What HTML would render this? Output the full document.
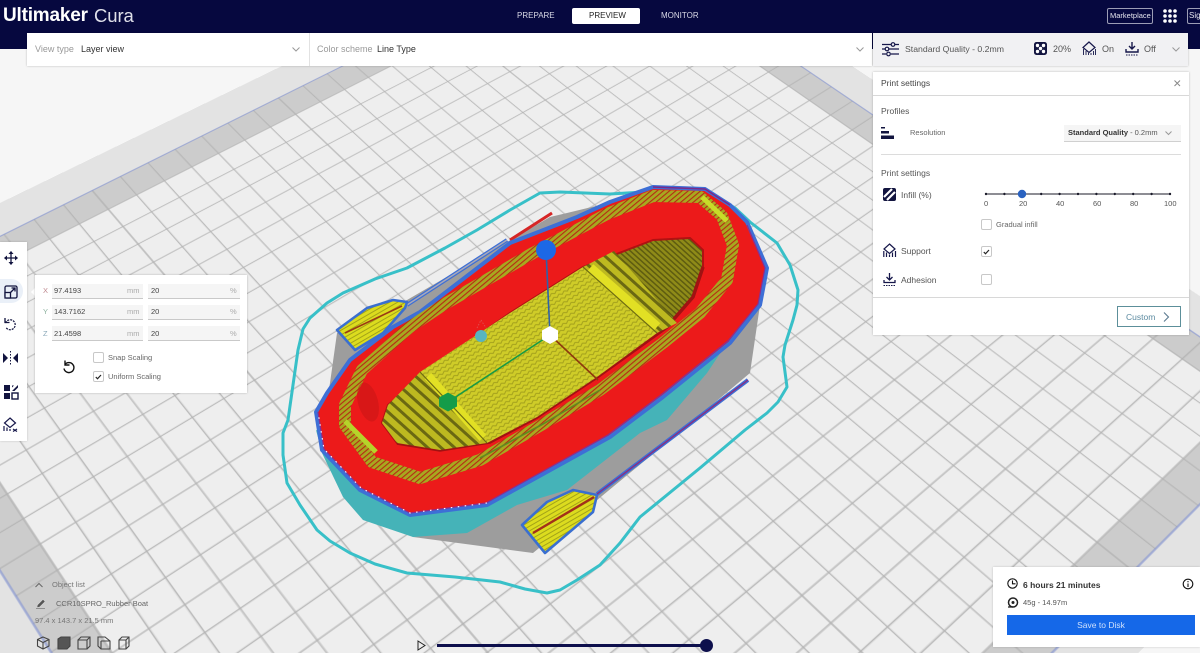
<!DOCTYPE html>
<html><head><meta charset="utf-8"><title>Ultimaker Cura</title>
<style>
html,body{margin:0;padding:0;width:1200px;height:653px;overflow:hidden;background:#f6f6f6;font-family:"Liberation Sans",sans-serif}
#root{position:relative;width:1200px;height:653px;overflow:hidden}
.abs{position:absolute}
.t{position:absolute;white-space:nowrap;line-height:12px;height:12px;font-size:8.5px;color:#333}
.box{position:absolute;background:#fff;box-sizing:border-box}
.cb{position:absolute;width:11px;height:11px;box-sizing:border-box;border:1px solid #c8c8c8;border-radius:2px;background:#fff}
.fld{position:absolute;height:15px;background:#f5f5f5;border-bottom:1px solid #c9c9c9;box-sizing:border-box}
svg{position:absolute;overflow:visible}
#plate{position:absolute;left:0;top:0;width:1000px;height:1000px;transform-origin:0 0;transform:matrix3d(.3061,.3356,0,-.00026778,-.6865,.2856,0,-.00023629,0,0,1,0,604,-42,0,1)}
</style></head><body><div id="root">

<div id="plate">
<svg width="1000" height="1000" viewBox="0 0 1000 1000" style="left:0;top:0">
<rect x="-90" y="-90" width="1180" height="1180" fill="#e3e3e3"/>
<rect x="-40" y="-40" width="1080" height="1080" fill="#cccccc"/>
<rect x="0" y="0" width="1000" height="1000" fill="#eeeeee"/>
<g stroke="#b3b3b3" stroke-width="1.300" fill="none">
<path d="M0-40V1040M35.700-40V1040M71.400-40V1040M107.100-40V1040M142.900-40V1040M178.600-40V1040M214.300-40V1040M250-40V1040M285.700-40V1040M321.400-40V1040M357.100-40V1040M392.900-40V1040M428.600-40V1040M464.300-40V1040M500-40V1040M535.700-40V1040M571.400-40V1040M607.100-40V1040M642.900-40V1040M678.600-40V1040M714.300-40V1040M750-40V1040M785.700-40V1040M821.400-40V1040M857.100-40V1040M892.900-40V1040M928.600-40V1040M964.300-40V1040M1000-40V1040"/>
<path d="M-40 0H1040M-40 35.700H1040M-40 71.400H1040M-40 107.100H1040M-40 142.900H1040M-40 178.600H1040M-40 214.300H1040M-40 250H1040M-40 285.700H1040M-40 321.400H1040M-40 357.100H1040M-40 392.900H1040M-40 428.600H1040M-40 464.300H1040M-40 500H1040M-40 535.700H1040M-40 571.400H1040M-40 607.100H1040M-40 642.900H1040M-40 678.600H1040M-40 714.300H1040M-40 750H1040M-40 785.700H1040M-40 821.400H1040M-40 857.100H1040M-40 892.900H1040M-40 928.600H1040M-40 964.300H1040M-40 1000H1040"/>
</g>
<rect x="-40" y="-40" width="1080" height="1080" fill="none" stroke="#7f8fd0" stroke-width="1.200"/>
</svg>
</div>

<!-- boat -->
<svg width="1200" height="653" viewBox="0 0 1200 653" style="left:0;top:0;filter:blur(.35px)">
<defs>
<pattern id="dots" width="6" height="4.500" patternUnits="userSpaceOnUse" patternTransform="rotate(-32)">
<rect width="6" height="4.500" fill="#cfcc28"/><path d="M0 1L3 3L6 1" stroke="#a3a01c" stroke-width="1" fill="none"/>
</pattern>
<pattern id="stripes" width="9" height="9" patternUnits="userSpaceOnUse" patternTransform="rotate(42)">
<rect width="9" height="9" fill="#bdb920"/><rect y="0" width="9" height="3" fill="#6a6812"/>
</pattern>
<pattern id="stripesD" width="4" height="4" patternUnits="userSpaceOnUse" patternTransform="rotate(42)">
<rect width="4" height="4" fill="#8f8b18"/><rect width="4" height="1.500" fill="#5e5c10"/>
</pattern>
<pattern id="hatch" width="4" height="4" patternUnits="userSpaceOnUse" patternTransform="rotate(50)">
<rect width="4" height="4" fill="#a8a81f"/><rect width="1.100" height="4" fill="#b52a14"/>
</pattern>
<pattern id="blade" width="4" height="4" patternUnits="userSpaceOnUse" patternTransform="rotate(-30)">
<rect width="4" height="4" fill="#dcdc1e"/><rect width="4" height="1" fill="#a3a318"/>
</pattern>
</defs>

<!-- skirt -->
<path d="M310 318L327 303L343 293L375 279L407 268L445 248L477 230L510 210L540 193L560 192L610 194L660 191L705 190L735 208L750 222L777 243L790 265L798 290L797 305L793 320L785 345L783 357L785 372L787 387L778 402L767 413L745 430L700 468L640 517L620 543L600 565L577 580L560 590L547 593L525 589L500 582L455 577L407 573L375 564L350 553L330 541L317 530L300 505L287 483L283 455L283 433L288 420L293 385L298 350L303 329Z" fill="none" stroke="#38c0c8" stroke-width="3" stroke-linejoin="round"/>

<!-- gray support -->
<polygon points="337,333 407,300 550,217 567,213 600,205 760,305 750,373 700,415 533,553 413,537 340,490 320,440 330,383" fill="#9d9d9d"/>
<!-- teal -->
<polygon points="316,430 322,453 343,497 363,520 413,537 467,533 517,505 567,490 640,433 667,420 707,373 747,313 760,277 700,300 600,400 430,480" fill="#45b3b8"/>

<!-- handle lines -->
<path d="M407 305L507 240" stroke="#3d6fd6" stroke-width="4" fill="none"/>
<path d="M407 305L507 240" stroke="#a9a9b9" stroke-width="1.500" fill="none"/>
<path d="M510 240L552 213" stroke="#d62626" stroke-width="3" fill="none"/>

<!-- hull -->
<polygon points="653,187 705,189 730,205 747,222 767,268 760,305 730,343 663,397 610,437 487,505 410,515 360,490 322,450 316,412 327,393 350,360 393,327 420,312 510,243 577,217 610,202" fill="#ec1a1a" stroke="#3d6fd6" stroke-width="4" stroke-linejoin="round"/>
<path d="M747 225L765 268L758 304L728 341L661 395L608 435L486 503L410 513L361 488L324 449L318 412" fill="none" stroke="#8a2f90" stroke-width="1.200"/>
<path d="M487 503L410 513L361 488L324 449L318 412" fill="none" stroke="#fff" stroke-width="1.100" stroke-dasharray="1.500 5.500"/>
<path d="M653 187L705 189L730 205" fill="none" stroke="#7a2a8a" stroke-width="1.500"/>

<!-- rim -->
<path d="M700 197L722 216L733 245L727 280L700 313L663 343L600 390L543 424L480 460L420 478L372 462L345 425L345 405L362 370L410 327L443 305L533 253L607 214L653 196Z" fill="none" stroke="url(#hatch)" stroke-width="12" stroke-linejoin="round"/>
<path d="M702 197L727 221" stroke="#c8dc28" stroke-width="5" fill="none"/>
<path d="M345 421L376 452" stroke="#b6d42a" stroke-width="5" fill="none"/>
<path d="M600 390L543 424L480 458" fill="none" stroke="#5f8a20" stroke-width="1.600"/>
<ellipse cx="368" cy="402" rx="10" ry="20" fill="#c81616" opacity=".55" transform="rotate(-15 368 402)"/>

<!-- floor -->
<polygon points="653,240 690,238 703,250 703,267 693,297 667,327 597,377 537,417 490,442 440,450 397,443 382,423 388,405 443,360 510,313 583,267" fill="url(#stripesD)" stroke="#b01212" stroke-width="2" stroke-linejoin="round"/>
<path d="M703 267L693 297L667 327L597 377L537 417L490 442L440 450L397 443" fill="none" stroke="#a01212" stroke-width="3.500"/>
<polygon points="583,267 614,251 677,323 657,333" fill="url(#stripes)"/>
<polygon points="420,372 388,405 382,423 397,443 440,450 487,443" fill="url(#stripes)"/>
<polygon points="420,372 510,313 583,267 657,333 597,377 537,417 487,443" fill="url(#dots)"/>
<path d="M590 268L657 327" stroke="#e2e024" stroke-width="10"/>
<path d="M428 376L483 438" stroke="#e2e024" stroke-width="9"/>
<path d="M583 267L657 333" stroke="#6e6c12" stroke-width="1.200"/>
<path d="M420 372L487 443" stroke="#6e6c12" stroke-width="1.200"/>

<!-- oars -->
<polygon points="337,330 355,350 383,333 405,308 407,302 393,300 367,308" fill="url(#blade)" stroke="#3a6fd0" stroke-width="2.600" stroke-linejoin="round"/>
<path d="M345 333L402 306" stroke="#9a3a14" stroke-width="1.600"/>
<polygon points="522,525 545,553 593,512 597,495 573,490 547,502" fill="url(#blade)" stroke="#3a6fd0" stroke-width="2.600" stroke-linejoin="round"/>
<path d="M533 533L594 497" stroke="#a2301a" stroke-width="2.400"/>
<path d="M597 494L748 380" stroke="#3d6fd6" stroke-width="4" fill="none"/>
<path d="M597 494L748 380" stroke="#8a2f80" stroke-width="1.400" fill="none"/>

<!-- gizmo -->
<path d="M546 250L550 335" stroke="#2f62a8" stroke-width="1.600"/>
<path d="M550 335L448 402" stroke="#189a44" stroke-width="1.600"/>
<path d="M550 335L598 380" stroke="#8f3a0c" stroke-width="1.600"/>
<circle cx="481" cy="336" r="6" fill="#58b5bf"/>
<path d="M477 328L481 320L486 328" fill="none" stroke="#e05050" stroke-width=".9" stroke-dasharray="1.500 1.500"/>
<circle cx="546" cy="250" r="10" fill="#1d68e6"/>
<polygon points="550,326 558,330.500 558,339.500 550,344 542,339.500 542,330.500" fill="#fff"/>
<polygon points="448,392.500 457,397.500 457,406.500 448,411.500 439,406.500 439,397.500" fill="#159c49"/>
</svg>

<!-- header -->
<div class="abs" style="left:0;top:0;width:1200px;height:49px;background:#06083f"></div>
<div class="t" style="left:3px;top:4px;height:24px;line-height:24px;font-size:19px;font-weight:bold;color:#fff;letter-spacing:-.2px">Ultimaker</div>
<div class="t" style="left:94px;top:4px;height:24px;line-height:24px;font-size:18.500px;color:#dfe0ea;letter-spacing:-.1px">Cura</div>
<div class="t" style="left:517px;top:10px;font-size:8px;color:#d8d9e6">PREPARE</div>
<div class="abs" style="left:572px;top:8px;width:68px;height:16px;background:#fff;border-radius:2px"></div>
<div class="t" style="left:589px;top:10px;font-size:8px;color:#222">PREVIEW</div>
<div class="t" style="left:661px;top:10px;font-size:8px;color:#d8d9e6">MONITOR</div>
<div class="abs" style="left:1107px;top:8px;width:46px;height:16px;border:1px solid #9c9db5;border-radius:2px;box-sizing:border-box"></div>
<div class="t" style="left:1110px;top:10px;font-size:7.500px;color:#e4e4ee">Marketplace</div>
<svg width="14" height="14" style="left:1163px;top:9px"><g fill="#fff"><circle cx="2" cy="2" r="1.800"/><circle cx="7" cy="2" r="1.800"/><circle cx="12" cy="2" r="1.800"/><circle cx="2" cy="7" r="1.800"/><circle cx="7" cy="7" r="1.800"/><circle cx="12" cy="7" r="1.800"/><circle cx="2" cy="12" r="1.800"/><circle cx="7" cy="12" r="1.800"/><circle cx="12" cy="12" r="1.800"/></g></svg>
<div class="abs" style="left:1187px;top:8px;width:13px;height:16px;border:1px solid #9c9db5;border-right:0;border-radius:2px 0 0 2px;box-sizing:border-box"></div>
<div class="t" style="left:1189px;top:10px;font-size:8px;color:#e4e4ee">Sig</div>

<!-- view toolbar -->
<div class="box" style="left:27px;top:33px;width:845px;height:33px;box-shadow:0 0 2px rgba(0,0,0,.25)"></div>
<div class="abs" style="left:309px;top:33px;width:1px;height:33px;background:#e2e2e2"></div>
<div class="t" style="left:35px;top:43px;font-size:9px;color:#999">View type</div>
<div class="t" style="left:81px;top:43px;font-size:9px;color:#333">Layer view</div>
<svg width="8" height="5" style="left:292px;top:47px"><path d="M.5.500L4 4L7.500.500" fill="none" stroke="#999" stroke-width="1"/></svg>
<div class="t" style="left:317px;top:43px;font-size:9px;color:#999">Color scheme</div>
<div class="t" style="left:377px;top:43px;font-size:9px;color:#333">Line Type</div>
<svg width="8" height="5" style="left:856px;top:47px"><path d="M.5.500L4 4L7.500.500" fill="none" stroke="#999" stroke-width="1"/></svg>

<!-- quality bar -->
<div class="box" style="left:873px;top:33px;width:315px;height:33px;background:#f1f1f3;box-shadow:0 0 2px rgba(0,0,0,.25)"></div>
<svg width="18" height="14" style="left:882px;top:42px"><g stroke="#16174a" stroke-width="1.200" fill="none"><path d="M0 2.500H9M13 2.500H17M0 7H3M7 7H17M0 12H4M9 12H17"/><circle cx="11" cy="2.500" r="1.800"/><circle cx="5" cy="7" r="1.800"/><circle cx="6.500" cy="12" r="1.800"/></g></svg>
<div class="t" style="left:905px;top:43px;font-size:8.700px;color:#555">Standard Quality - 0.2mm</div>
<svg width="14" height="14" style="left:1034px;top:42px"><rect width="13" height="13" rx="2.500" fill="#12143f"/><g fill="#fff"><circle cx="3.500" cy="3.500" r="1.700"/><circle cx="9.500" cy="3.500" r="1.700"/><circle cx="6.500" cy="6.500" r="1.700"/><circle cx="3.500" cy="9.500" r="1.700"/><circle cx="9.500" cy="9.500" r="1.700"/></g></svg>
<div class="t" style="left:1053px;top:43px;font-size:9px;color:#555">20%</div>
<svg width="15" height="15" style="left:1082px;top:41px"><g fill="none" stroke="#16174a" stroke-width="1.200"><path d="M7 1L13 6.500L7 11.500L1 6.500Z"/><path d="M1.500 8V14M4 10V14M6.500 12V14M9 12V14M11.500 10V14M13.500 8V14" stroke-width=".9"/></g></svg>
<div class="t" style="left:1102px;top:43px;font-size:9px;color:#555">On</div>
<svg width="15" height="15" style="left:1125px;top:41px"><g fill="none" stroke="#16174a" stroke-width="1.400"><path d="M7 1V8M4 5L7 8L10 5M1 8V11H13V8"/><path d="M1 14H13" stroke-dasharray="1.500 1" stroke-width="1"/></g></svg>
<div class="t" style="left:1144px;top:43px;font-size:9px;color:#555">Off</div>
<svg width="8" height="5" style="left:1172px;top:47px"><path d="M.5.500L4 4L7.500.500" fill="none" stroke="#999" stroke-width="1"/></svg>

<!-- print settings -->
<div class="box" style="left:873px;top:72px;width:316px;height:263px;box-shadow:0 0 2px rgba(0,0,0,.25)"></div>
<div class="t" style="left:881px;top:77px;font-size:8.500px;color:#444">Print settings</div>
<svg width="7" height="7" style="left:1174px;top:80px"><path d="M.5.500L6 6M6 .5L.5 6" stroke="#888" stroke-width="1"/></svg>
<div class="abs" style="left:873px;top:95px;width:316px;height:1px;background:#d8d8d8"></div>
<div class="t" style="left:881px;top:105px;font-size:8.500px;color:#555">Profiles</div>
<svg width="14" height="14" style="left:881px;top:126px"><path d="M0 1H4V2.500H0ZM0 5H8V7.500H0ZM0 9.500H13V13H0Z" fill="#12143f"/></svg>
<div class="t" style="left:910px;top:127px;font-size:7.500px;color:#666">Resolution</div>
<div class="abs" style="left:1064px;top:125px;width:117px;height:17px;background:#f5f5f5;border-bottom:1px solid #d0d0d0;box-sizing:border-box"></div>
<div class="t" style="left:1068px;top:127px;font-size:7.500px;color:#555"><b style="color:#333">Standard Quality</b> - 0.2mm</div>
<svg width="7" height="5" style="left:1165px;top:131px"><path d="M.5.500L3.500 3.500L6.500.500" fill="none" stroke="#999" stroke-width="1"/></svg>
<div class="abs" style="left:881px;top:154px;width:300px;height:1px;background:#dcdcdc"></div>
<div class="t" style="left:881px;top:167px;font-size:8.500px;color:#555">Print settings</div>
<svg width="14" height="14" style="left:883px;top:188px"><rect width="13" height="13" rx="2" fill="#12143f"/><path d="M1 9L9 1M4 12L12 4" stroke="#fff" stroke-width="2.200"/></svg>
<div class="t" style="left:901px;top:189px;font-size:8.500px;color:#555">Infill (%)</div>
<svg width="190" height="8" style="left:984px;top:190px"><path d="M2 4H186" stroke="#1b1b2a" stroke-width="1"/><g fill="#1b1b2a"><circle cx="2" cy="4" r="1.200"/><circle cx="20.400" cy="4" r="1.200"/><circle cx="57.200" cy="4" r="1.200"/><circle cx="75.600" cy="4" r="1.200"/><circle cx="94" cy="4" r="1.200"/><circle cx="112.400" cy="4" r="1.200"/><circle cx="130.800" cy="4" r="1.200"/><circle cx="149.200" cy="4" r="1.200"/><circle cx="167.600" cy="4" r="1.200"/><circle cx="186" cy="4" r="1.200"/></g><circle cx="38" cy="4" r="4.200" fill="#2a62c0"/></svg>
<div class="t" style="left:984px;top:198px;font-size:7.500px;color:#555">0</div>
<div class="t" style="left:1019px;top:198px;font-size:7.500px;color:#555">20</div>
<div class="t" style="left:1056px;top:198px;font-size:7.500px;color:#555">40</div>
<div class="t" style="left:1093px;top:198px;font-size:7.500px;color:#555">60</div>
<div class="t" style="left:1130px;top:198px;font-size:7.500px;color:#555">80</div>
<div class="t" style="left:1164px;top:198px;font-size:7.500px;color:#555">100</div>
<div class="cb" style="left:981px;top:219px"></div>
<div class="t" style="left:996px;top:219px;font-size:7.500px;color:#666">Gradual infill</div>
<svg width="15" height="15" style="left:883px;top:243px"><g fill="none" stroke="#16174a" stroke-width="1.200"><path d="M6.500 1L12 6L6.500 10.500L1 6Z"/><path d="M.8 8V14M3.500 9.500V14M6.500 11.500V14M9.500 9.500V14M12.500 8V14"/></g></svg>
<div class="t" style="left:901px;top:245px;font-size:8.500px;color:#555">Support</div>
<div class="cb" style="left:981px;top:246px"></div>
<svg width="7" height="6" style="left:983px;top:249px"><path d="M.8 3L2.500 4.800L6 1" fill="none" stroke="#222" stroke-width="1.200"/></svg>
<svg width="14" height="15" style="left:883px;top:272px"><g fill="none" stroke="#16174a" stroke-width="1.300"><path d="M6.500 1V8M3.500 5L6.500 8L9.500 5M1 8V10.500H12V8"/><path d="M.5 13.500H13" stroke-dasharray="1.500 1" stroke-width="1"/></g></svg>
<div class="t" style="left:901px;top:274px;font-size:8.500px;color:#555">Adhesion</div>
<div class="cb" style="left:981px;top:274px"></div>
<div class="abs" style="left:873px;top:297px;width:316px;height:1px;background:#d8d8d8"></div>
<div class="abs" style="left:1117px;top:306px;width:64px;height:21px;border:1px solid #5c8f9a;box-sizing:border-box"></div>
<div class="t" style="left:1126px;top:311px;font-size:8.500px;color:#5b8aa0">Custom</div>
<svg width="7" height="10" style="left:1163px;top:312px"><path d="M1 .5L5.500 5L1 9.500" fill="none" stroke="#5b7a90" stroke-width="1.100"/></svg>

<!-- left tools -->
<div class="box" style="left:0;top:242px;width:27px;height:199px;box-shadow:0 0 2px rgba(0,0,0,.2)"></div>
<div class="abs" style="left:0;top:279px;width:23px;height:24px;background:#eaf0f8;border-radius:0 12px 12px 0"></div>
<svg width="14" height="14" style="left:4px;top:251px"><path d="M7 .5V13.500M.5 7H13.500" stroke="#12143f" stroke-width="1.300"/><path d="M7 0L9.500 3H4.500ZM7 14L4.500 11H9.500ZM0 7L3 4.500V9.500ZM14 7L11 9.500V4.500Z" fill="#12143f"/></svg>
<svg width="14" height="14" style="left:4px;top:285px"><g fill="none" stroke="#12143f" stroke-width="1.300"><rect x="1" y="1" width="12" height="12" rx="1.500"/><rect x="1" y="7.500" width="5.500" height="5.500" fill="#eaf0f8"/><path d="M6 8L11 3M7.500 3H11V6.500"/></g></svg>
<svg width="15" height="15" style="left:3px;top:317px"><path d="M2.500 6A5 5 0 1 1 3 10.500" fill="none" stroke="#12143f" stroke-width="1.200" stroke-dasharray="2 1"/><path d="M2 1V5.500H6.500" fill="none" stroke="#12143f" stroke-width="1.300"/></svg>
<svg width="16" height="14" style="left:3px;top:351px"><path d="M0 2L5 7L0 12ZM15 2L10 7L15 12Z" fill="#12143f"/><path d="M7.500 0V14" stroke="#12143f" stroke-width="1" stroke-dasharray="1.500 1.500"/></svg>
<svg width="14" height="14" style="left:4px;top:385px"><g fill="#12143f"><rect width="6" height="6"/><rect y="8" width="6" height="6"/><rect x="8" y="8" width="6" height="6" fill="none" stroke="#12143f" stroke-width="1.400"/><path d="M8 6L14 0V2.500L10.500 6ZM8 2.500L10 .5H8Z"/></g></svg>
<svg width="15" height="15" style="left:3px;top:417px"><g fill="none" stroke="#16174a" stroke-width="1.200"><path d="M7 1L12.500 6L7 10.500L1.500 6Z"/><path d="M1 9V14M4 10.500V14M7 12V14M10 12L14 14.500M14 12L10 14.500"/></g></svg>

<!-- scale panel -->
<div class="abs" style="left:31px;top:288px;width:0;height:0;border:4px solid transparent;border-right:4px solid #fff;border-left:0"></div>
<div class="box" style="left:35px;top:275px;width:212px;height:118px;box-shadow:0 0 2px rgba(0,0,0,.25)"></div>
<div class="t" style="left:43px;top:285px;font-size:7.500px;color:#c08a90">X</div>
<div class="t" style="left:43px;top:306px;font-size:7.500px;color:#8fb3a0">Y</div>
<div class="t" style="left:43px;top:328px;font-size:7.500px;color:#8aa8b8">Z</div>
<div class="fld" style="left:52px;top:284px;width:91px"></div><div class="fld" style="left:148px;top:284px;width:92px"></div>
<div class="fld" style="left:52px;top:305px;width:91px"></div><div class="fld" style="left:148px;top:305px;width:92px"></div>
<div class="fld" style="left:52px;top:326px;width:91px"></div><div class="fld" style="left:148px;top:326px;width:92px"></div>
<div class="t" style="left:54px;top:285px;font-size:7.500px;color:#444">97.4193</div>
<div class="t" style="left:54px;top:306px;font-size:7.500px;color:#444">143.7162</div>
<div class="t" style="left:54px;top:328px;font-size:7.500px;color:#444">21.4598</div>
<div class="t" style="left:127px;top:285px;font-size:7.500px;color:#aaa">mm</div>
<div class="t" style="left:127px;top:306px;font-size:7.500px;color:#aaa">mm</div>
<div class="t" style="left:127px;top:328px;font-size:7.500px;color:#aaa">mm</div>
<div class="t" style="left:151px;top:285px;font-size:7.500px;color:#444">20</div>
<div class="t" style="left:151px;top:306px;font-size:7.500px;color:#444">20</div>
<div class="t" style="left:151px;top:328px;font-size:7.500px;color:#444">20</div>
<div class="t" style="left:230px;top:285px;font-size:7.500px;color:#aaa">%</div>
<div class="t" style="left:230px;top:306px;font-size:7.500px;color:#aaa">%</div>
<div class="t" style="left:230px;top:328px;font-size:7.500px;color:#aaa">%</div>
<svg width="13" height="14" style="left:62px;top:360px"><path d="M3 4.500A5 5 0 1 1 2 8.500" fill="none" stroke="#111" stroke-width="1.400"/><path d="M3 .5V5H7.500" fill="none" stroke="#111" stroke-width="1.400"/></svg>
<div class="cb" style="left:93px;top:352px"></div>
<div class="t" style="left:108px;top:352px;font-size:7.500px;color:#666">Snap Scaling</div>
<div class="cb" style="left:93px;top:371px"></div>
<svg width="7" height="6" style="left:95px;top:374px"><path d="M.8 3L2.500 4.800L6 1" fill="none" stroke="#222" stroke-width="1.200"/></svg>
<div class="t" style="left:108px;top:371px;font-size:7.500px;color:#666">Uniform Scaling</div>

<!-- object list -->
<svg width="8" height="5" style="left:35px;top:583px"><path d="M.5 4L4 .5L7.500 4" fill="none" stroke="#666" stroke-width="1"/></svg>
<div class="t" style="left:52px;top:579px;font-size:7.500px;color:#777">Object list</div>
<svg width="10" height="10" style="left:36px;top:599px"><path d="M2 6L7 1L8.500 2.500L3.500 7.500L1.500 8ZM0 9.500H9" fill="#555" stroke="#555" stroke-width=".5"/></svg>
<div class="t" style="left:56px;top:598px;font-size:7.500px;color:#666">CCR10SPRO_Rubber Boat</div>
<div class="t" style="left:35px;top:615px;font-size:7.500px;color:#777">97.4 x 143.7 x 21.5 mm</div>
<svg width="100" height="14" style="left:37px;top:636px"><g fill="none" stroke="#444" stroke-width="1.100"><path d="M6 1L12 3.500V10L6 13L.5 10V3.500ZM.5 3.500L6 6.500L12 3.500M6 6.500V13"/><path d="M21 3L24 1H33V10L30 13H21Z" fill="#555"/><path d="M41 4H50V13H41ZM41 4L44 1H53V10L50 13M50 4L53 1" /><path d="M61 1H68L73 5V13H64L61 10ZM61 1V10M64 5H73M64 5V13"/><path d="M82 4L85 1H92V10L89 13H82ZM82 4H89V13M89 4L92 1"/></g></svg>

<!-- layer slider -->
<svg width="10" height="11" style="left:417px;top:640px"><path d="M1 1L8 5.500L1 10Z" fill="none" stroke="#222" stroke-width="1"/></svg>
<div class="abs" style="left:437px;top:644px;width:269px;height:3px;background:#0d0f4c"></div>
<div class="abs" style="left:700px;top:639px;width:13px;height:13px;border-radius:50%;background:#0d0f4c"></div>

<!-- save panel -->
<div class="box" style="left:993px;top:567px;width:207px;height:80px;box-shadow:0 0 2px rgba(0,0,0,.2)"></div>
<svg width="12" height="12" style="left:1007px;top:578px"><circle cx="5.500" cy="5.500" r="4.700" fill="none" stroke="#111" stroke-width="1.100"/><path d="M5.500 2.500V5.800H8.500" fill="none" stroke="#111" stroke-width="1.100"/></svg>
<div class="t" style="left:1023px;top:579px;font-size:8.500px;font-weight:bold;color:#333">6 hours 21 minutes</div>
<svg width="12" height="12" style="left:1182px;top:578px"><circle cx="6" cy="6" r="4.800" fill="none" stroke="#111" stroke-width="1.100"/><path d="M6 5.500V9M6 3V4.300" stroke="#111" stroke-width="1.100"/></svg>
<svg width="12" height="12" style="left:1007px;top:597px"><circle cx="6" cy="5.500" r="4.500" fill="none" stroke="#222" stroke-width="1.500"/><circle cx="6" cy="5.500" r="1.500" fill="#222"/><path d="M1 10H6" stroke="#222" stroke-width="1.300"/></svg>
<div class="t" style="left:1023px;top:597px;font-size:7.500px;color:#555">45g - 14.97m</div>
<div class="abs" style="left:1007px;top:615px;width:188px;height:20px;background:#1568e8"></div>
<div class="t" style="left:1007px;top:619px;width:188px;text-align:center;font-size:8.500px;color:#cfe0fb">Save to Disk</div>

</div></body></html>
